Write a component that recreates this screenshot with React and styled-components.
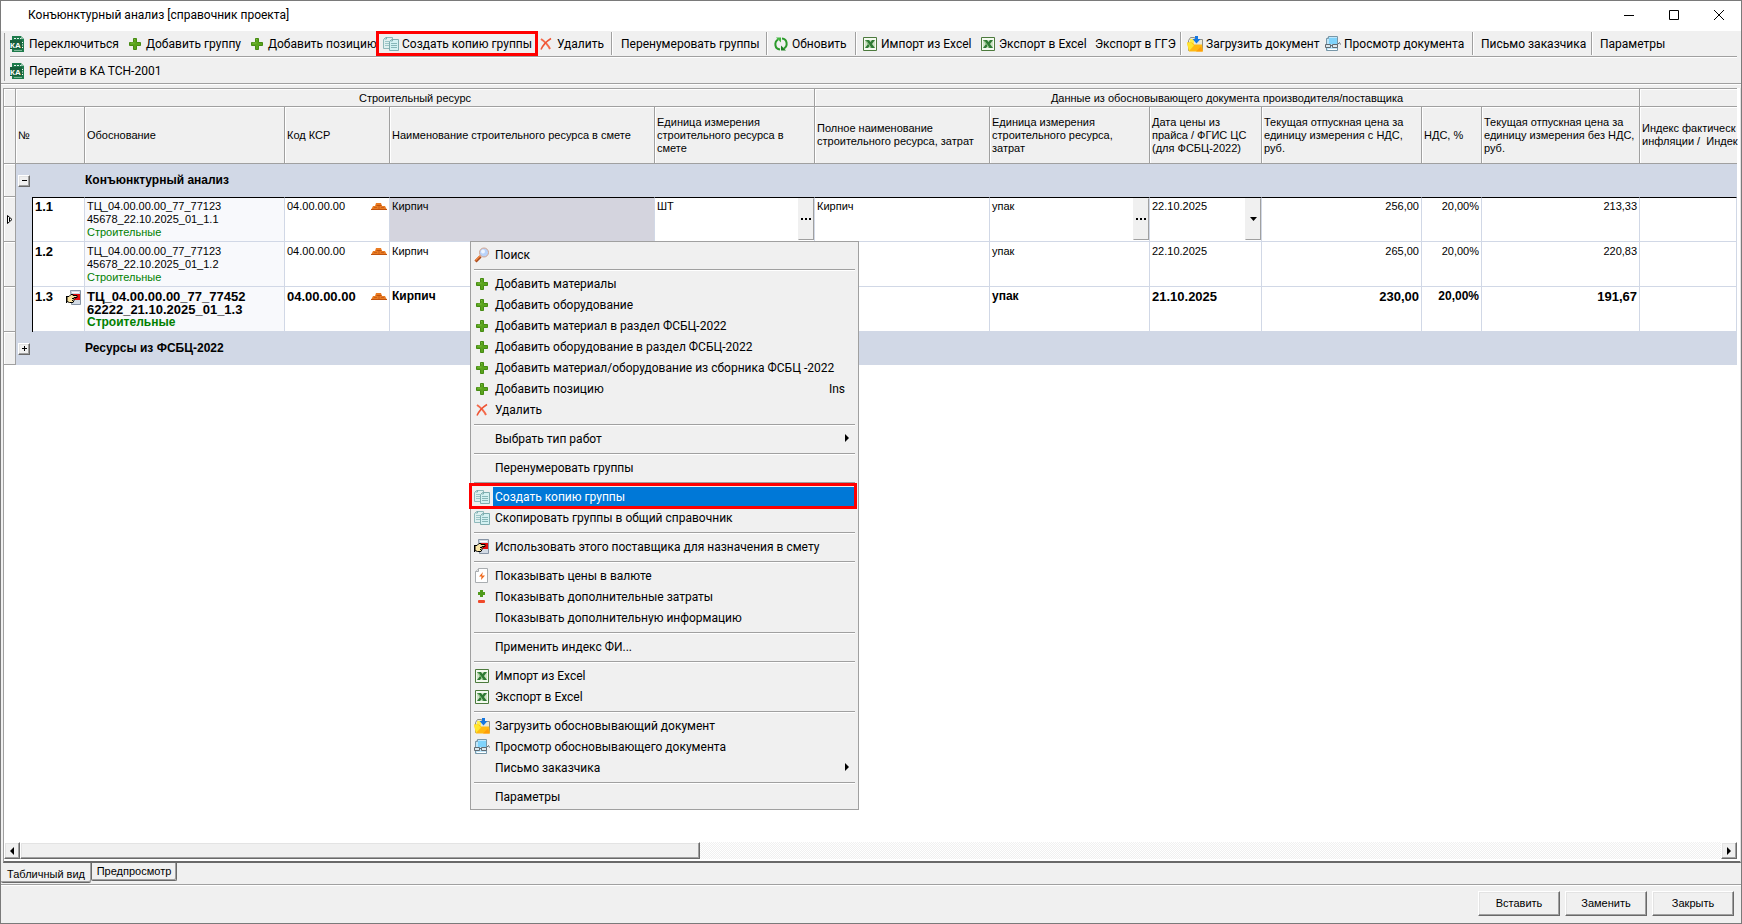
import React from "react";
import styled, { createGlobalStyle, css } from "styled-components";

const GlobalStyle = createGlobalStyle`
  * {
    box-sizing: border-box;
  }
  body {
    margin: 0;
    background: #f0f0f0;
    color: #000;
    font-family: "Liberation Sans", Arial, sans-serif;
    font-size: 11px;
    line-height: 13px;
  }
  button {
    margin: 0;
    padding: 0;
    border: 0;
    background: none;
    color: inherit;
    font: inherit;
    white-space: nowrap;
  }
  svg {
    flex: none;
  }
`;

const uiFont = css`
  font-family: Roboto, "Segoe UI", sans-serif;
  font-size: 12px;
  line-height: 16px;
`;

const raised = css`
  background: #f0f0f0;
  border: 1px solid #fff;
  border-right-color: #696969;
  border-bottom-color: #696969;
  box-shadow: inset -1px -1px 0 #a0a0a0, inset 1px 1px 0 #e3e3e3;
`;

// Window frame

const Window = styled.div`
  position: relative;
  display: flex;
  flex-direction: column;
  min-height: 100vh;
  border: 1px solid #7a7a7a;
  background: #f0f0f0;
  overflow: hidden;
`;

const TitleBar = styled.header`
  display: flex;
  align-items: center;
  height: 30px;
  padding: 0 0 2px 27px;
  background: #fff;
`;

const Title = styled.h1`
  ${uiFont}
  flex: 1;
  margin: 0;
  font-weight: 400;
`;

const WindowButton = styled.button`
  display: flex;
  align-items: center;
  justify-content: center;
  width: 45px;
  height: 28px;
`;

// Toolbar

const ToolbarArea = styled.div`
  padding-left: 9px;
  border-bottom: 1px solid #a0a0a0;
  box-shadow: 0 1px 0 #fff;
  background: linear-gradient(#a0a0a0, #a0a0a0) 3px 2px / 1px 48px no-repeat;
`;

const ToolbarRow = styled.div`
  display: flex;
  align-items: flex-start;
  height: ${(p) => (p.$line ? "27px" : "25px")};
  margin-right: 4px;
  border-bottom: ${(p) => (p.$line ? "1px solid #fff" : "0")};
  box-shadow: ${(p) => (p.$line ? "inset 0 -1px 0 #a0a0a0" : "none")};
`;

const ToolButton = styled.button`
  ${uiFont}
  display: flex;
  flex: none;
  align-items: center;
  gap: 3px;
  width: ${(p) => p.$width}px;
  height: 25px;
  padding-left: ${(p) => p.$pad || 0}px;
  border: ${(p) => (p.$marked ? "3px solid #f00" : "0")};
`;

const ToolSeparator = styled.span`
  flex: none;
  width: 2px;
  height: 23px;
  margin-top: 1px;
  border-left: 1px solid #a0a0a0;
  border-right: 1px solid #fff;
`;

// Grid

const GridArea = styled.main`
  display: flex;
  flex: 1;
  flex-direction: column;
  margin: 4px 0 0 2px;
  padding-right: 3px;
  border-right: 1px solid #e3e3e3;
  border-left: 1px solid #a0a0a0;
  border-bottom: 2px solid #696969;
  background: #fff;
`;

const Table = styled.table`
  width: 100%;
  table-layout: fixed;
  border-spacing: 0;
  border-top: 1px solid #a0a0a0;
`;

const HeadCell = styled.th`
  height: ${(p) => (p.$band ? "18px" : "57px")};
  padding: ${(p) => (p.$band ? "1px 2px 0" : "0 0 0 2px")};
  border-right: 1px solid #a0a0a0;
  border-bottom: 1px solid #a0a0a0;
  box-shadow: inset 1px 1px 0 #fff;
  background: #f0f0f0;
  font-weight: 400;
  text-align: ${(p) => (p.$band ? "center" : "left")};
  white-space: pre;

  &:last-child {
    border-right: 0;
  }
`;

const Gutter = styled.td`
  padding: 0;
  border-right: 1px solid #a0a0a0;
  border-bottom: 1px solid #a0a0a0;
  box-shadow: inset 1px 1px 0 #fff;
  background: #f0f0f0;

  svg {
    display: block;
    margin: 0 auto;
  }
`;

const GroupRow = styled.tr`
  height: 33px;
  background: #d1d8e6;
  font-size: 12px;
  font-weight: 700;
`;

const GroupCell = styled.td`
  padding: 0 0 0 ${(p) => (p.$toggle ? "2px" : "0")};
`;

const Toggle = styled.button`
  ${raised}
  display: flex;
  align-items: center;
  justify-content: center;
  width: 12px;
  height: 12px;
`;

const Indent = styled.td`
  border-right: 1px solid #000;
  background: #d1d8e6;
`;

const Row = styled.tr`
  height: 45px;
  font-weight: ${(p) => (p.$bold ? 700 : 400)};
  font-size: ${(p) => (p.$bold ? "12px" : "11px")};
`;

const Cell = styled.td`
  height: 45px;
  padding: ${(p) => (p.$first ? "2px" : "3px")} 2px 0;
  border-top: ${(p) => (p.$first ? "1px solid #000" : "0")};
  border-right: 1px solid #d1d8e6;
  border-bottom: 1px solid #d1d8e6;
  background: ${(p) => p.$bg || "#fff"};
  vertical-align: top;
  text-align: ${(p) => (p.$right ? "right" : "left")};
`;

const CellLine = styled.div`
  display: flex;
  justify-content: space-between;
  height: 13px;
`;

const Digits = styled.div`
  font-size: ${(p) => (p.$bold ? "13px" : "11px")};
`;

const RowNumber = styled.strong`
  font-size: 13px;
`;

const WorkType = styled.div`
  color: #008000;
`;

const Editor = styled.div`
  display: flex;
  justify-content: space-between;
  height: 41px;
  margin: -2px -2px 0 0;
`;

const EditorText = styled.span`
  padding-top: 2px;
`;

const EditorButton = styled.button`
  display: flex;
  align-items: center;
  justify-content: center;
  width: 16px;
  height: 42px;
  border: 1px solid #f0f0f0;
  border-right-color: #a0a0a0;
  border-bottom-color: #a0a0a0;
  background: #f0f0f0;
`;

// Scroll bar

const ScrollBar = styled.div`
  display: flex;
  height: 17px;
  margin-top: auto;
  margin-bottom: 2px;
  background: repeating-conic-gradient(#f0f0f0 0% 25%, #fff 0% 50%) 0 0 / 2px 2px;
`;

const ScrollButton = styled.button`
  ${raised}
  display: flex;
  flex: none;
  align-items: center;
  justify-content: center;
  width: 16px;
`;

const ScrollTrack = styled.div`
  flex: 1;
`;

const ScrollThumb = styled.div`
  ${raised}
  width: 40%;
  height: 17px;
`;

// Bottom tabs and buttons

const Tabs = styled.div`
  display: flex;
  align-items: flex-start;
  height: 22px;
  border-bottom: 1px solid #a0a0a0;
`;

const Tab = styled.button`
  width: ${(p) => (p.$active ? "90px" : "86px")};
  height: ${(p) => (p.$active ? "20px" : "18px")};
  padding-top: ${(p) => (p.$active ? "3px" : "0")};
  border: 1px solid #696969;
  border-top: 0;
  border-left: ${(p) => (p.$active ? "0" : "1px solid #696969")};
  border-right-width: ${(p) => (p.$active ? "0" : "1px")};
  border-radius: 0 0 2px 2px;
  box-shadow: inset -1px -1px 0 #a0a0a0;
`;

const Footer = styled.footer`
  display: flex;
  justify-content: flex-end;
  gap: 5px;
  height: 38px;
  padding: 5px 7px 0 0;
  border-top: 1px solid #fff;
`;

const FooterButton = styled.button`
  ${raised}
  width: 82px;
  height: 25px;
`;

// Context menu

const Menu = styled.div`
  position: absolute;
  top: 240px;
  left: 469px;
  width: 389px;
  padding: 3px 0 1px;
  border: 1px solid #a0a0a0;
  background: #f0f0f0;
`;

const MenuItem = styled.button`
  ${uiFont}
  position: relative;
  display: flex;
  align-items: center;
  width: 100%;
  height: 21px;
  padding: 0 3px;
  color: ${(p) => (p.$marked ? "#fff" : "#000")};

  ${(p) =>
    p.$marked &&
    css`
      &::after {
        content: "";
        position: absolute;
        inset: -4px 1px -1px -2px;
        border: 3px solid #f00;
      }
    `}
`;

const MenuIcon = styled.span`
  display: flex;
  flex: none;
  align-items: center;
  width: 19px;
  height: 21px;
  padding-bottom: 1px;
`;

const MenuLabel = styled.span`
  flex: 1;
  height: 21px;
  padding-left: 2px;
  line-height: 21px;
  text-align: left;
  background: ${(p) => (p.$marked ? "#0078d7" : "none")};
`;

const Shortcut = styled.span`
  padding-right: 10px;
  line-height: 21px;
`;

const Arrow = styled.svg`
  margin: 0 6px 3px 0;
`;

const MenuLine = styled.div`
  height: 2px;
  margin: 3px;
  border-top: 1px solid #a0a0a0;
  border-bottom: 1px solid #fff;
`;

// Icons

const Icon = ({ children }) => (
  <svg width="16" height="16" viewBox="0 0 16 16" aria-hidden="true">
    {children}
  </svg>
);

const KaIcon = () => (
  <Icon>
    <path d="M2 0h9l3 3v13H2z" fill="#1e7b4c" />
    <path d="M11 0l3 3h-3z" fill="#8fc0a6" />
    <path d="M4 2.500h7" stroke="#e6f3ec" strokeDasharray="2 1" />
    <path d="M0 4h12v9H0z" fill="#17603b" />
    <path d="M4 14.500h8" stroke="#7fb898" />
    <text x="0" y="11.500" fontSize="8" fontWeight="700" fontFamily="Liberation Sans" fill="#fff">
      КА
    </text>
    <path d="M12.500 6v1M12.500 8.500v1M12.500 11v1" stroke="#fff" />
  </Icon>
);

const PlusIcon = () => (
  <Icon>
    <path
      d="M6.500 2.500h3v4h4v3h-4v4h-3v-4h-4v-3h4z"
      fill="#5aa41c"
      stroke="#468b13"
      strokeLinejoin="round"
    />
    <path d="M7 3.500h1M3.500 7h4" stroke="#7cbc3e" />
  </Icon>
);

const DeleteIcon = () => (
  <Icon>
    <path d="M3 3c3 2 7 6 9 10" fill="none" stroke="#f4694a" strokeWidth="2" />
    <path d="M13 2.500C9 5 5 9 3 13.500" fill="none" stroke="#ef5434" strokeWidth="1.500" />
  </Icon>
);

const CopyIcon = () => (
  <Icon>
    <path d="M.5 3.500l2-2h7v11h-9z" fill="#dff0f0" stroke="#8fb9bb" />
    <path d="M2 5.500h4M2 7.500h4M2 9.500h4" stroke="#9cc6c8" />
    <path d="M6.500 5.500l2-2h7v11h-9z" fill="#d3f1f2" stroke="#7fadb0" />
    <path d="M8 7.500h6M8 9.500h6M8 11.500h6" stroke="#86b6b8" />
    <path d="M3.500 1v2h-2M9.500 3v2h-2" fill="none" stroke="#7fadb0" />
  </Icon>
);

const RefreshIcon = () => (
  <Icon>
    <path d="M7 13.500C1.500 13 1 6 5 3.500" fill="none" stroke="#2c9a2c" strokeWidth="2" />
    <path d="M3 1.500h5v5z" fill="#3fb53c" />
    <path d="M9 2.500c5.500.5 6 7.500 2 10" fill="none" stroke="#2c9a2c" strokeWidth="2" />
    <path d="M13 14.500H8v-5z" fill="#1d7f22" />
  </Icon>
);

const ExcelIcon = () => (
  <Icon>
    <path d="M1.500 1.500h13v13h-13z" fill="#f4faf0" stroke="#4c7a3d" />
    <path d="M3 4h10v8H3z" fill="#cfe3c6" />
    <path d="M3 4h4l1.500 2L10 4h3l-3 4 3 4H9L7.500 10 6 12H3l3-4z" fill="#2f7a34" />
    <path d="M4 4.500l5 7" stroke="#8fc585" />
  </Icon>
);

const FolderIcon = () => (
  <Icon>
    <path d="M1.500 14.500v-10l2-3h4l1 2h7v11z" fill="#e9e9d8" stroke="#8e8e86" />
    <path d="M3 3h4v5H3z" fill="#ffee4c" />
    <path d="M0 6.500h5l2 2h8l1 7H2z" fill="#ffb911" />
    <path d="M0 6.500h4l3 3L2 15z" fill="#ffe62e" />
    <path d="M9 15.500l5-5 1.500 5z" fill="#ff9d0a" />
    <path d="M8 0h3v3h2.500l-4 4.500-4-4.500H8z" fill="#1577e0" />
  </Icon>
);

const ViewIcon = () => (
  <Icon>
    <path d="M3.500.5h9v14h-11v-12z" fill="#bfe6fa" stroke="#7797a8" />
    <path d="M4 2h8v6H4z" fill="#7fd3fb" />
    <path d="M1.500 2.500h2v-2" fill="#fff" stroke="#7797a8" />
    <path
      d="M.5 8.500h5v3h-5zM7.500 8.500h5v3h-5zM5.500 9.500h2M12.500 8.500l2-2 1 2"
      fill="#dce8ee"
      stroke="#626a70"
    />
    <path d="M3 13.500h9" stroke="#fff" />
  </Icon>
);

const SearchIcon = () => (
  <Icon>
    <path d="M1.500 14.500l5-5" stroke="#a9481c" strokeWidth="3" />
    <path d="M1.500 13.500l5-5" stroke="#f2863e" strokeWidth="1.500" />
    <circle cx="10" cy="5.500" r="4.500" fill="#b9d3fa" stroke="#d3a58e" strokeWidth="1" />
    <circle cx="9" cy="4.500" r="2" fill="#eef5ff" />
  </Icon>
);

const HandIcon = () => (
  <Icon>
    <path d="M4.500.5h10v14h-9v-4z" fill="#d3dbe5" stroke="#8794a5" />
    <path d="M6 2.500h7" stroke="#fff" />
    <path d="M7 4h7v6H7z" fill="#e40c0c" />
    <path
      d="M1 6.500h2l2-2h2v1h4v2H8l1 1-1 1v1l-1 2H3.500L1 11.500z"
      fill="#fbe6a5"
      stroke="#000"
    />
    <path d="M.5 6v7" stroke="#000" />
    <path d="M6 8.500h2M6 10.500h1" stroke="#000" />
  </Icon>
);

const CurrencyIcon = () => (
  <Icon>
    <path d="M4.500.5h9v14h-12v-11z" fill="#fff" stroke="#a9adb0" />
    <path d="M1.500 3.500h3v-3" fill="#e6e6e6" stroke="#a9adb0" />
    <path d="M9 4L5 8.500h2.500L7 12l4-4.500H8z" fill="#f0691b" />
  </Icon>
);

const PlusMinusIcon = () => (
  <Icon>
    <path d="M6 1h3v2h2v3H9v2H6V6H4V3h2z" fill="#4f9a1b" />
    <rect x="4" y="11" width="7" height="3" rx="1" fill="#f0492a" />
  </Icon>
);

const BricksIcon = () => (
  <Icon>
    <path d="M5 3h5l1 3h3l2 4H0l2-4h2z" fill="#ea7b22" />
    <path d="M5.500 5.500h5M0 9.500h16" stroke="#c0540f" />
    <path d="M8 6v3M3 7.500h3M10 7.500h3" stroke="#c9611a" />
  </Icon>
);

const DotsIcon = () => (
  <svg width="10" height="2" viewBox="0 0 10 2" aria-hidden="true">
    <path d="M0 0h2v2H0zM4 0h2v2H4zM8 0h2v2H8z" />
  </svg>
);

const DownIcon = () => (
  <svg width="7" height="4" viewBox="0 0 7 4" aria-hidden="true">
    <path d="M0 0h7L3.500 4z" />
  </svg>
);

const CurrentRowIcon = () => (
  <svg width="6" height="9" viewBox="0 0 6 9" aria-hidden="true">
    <path d="M.5.5v8L5 4.500z" fill="#fff" stroke="#000" />
    <path d="M2 3h1v3H2z" />
  </svg>
);

const toolbar = [
  { label: "Переключиться", icon: KaIcon, width: 117 },
  { label: "Добавить группу", icon: PlusIcon, width: 122 },
  { label: "Добавить позицию", icon: PlusIcon, width: 127 },
  { label: "Создать копию группы", icon: CopyIcon, width: 162, pad: 4, marked: true },
  { label: "Удалить", icon: DeleteIcon, width: 73 },
  null,
  { label: "Перенумеровать группы", width: 153, pad: 8 },
  null,
  { label: "Обновить", icon: RefreshIcon, width: 87, pad: 5 },
  null,
  { label: "Импорт из Excel", icon: ExcelIcon, width: 123, pad: 5 },
  { label: "Экспорт в Excel", icon: ExcelIcon, width: 108 },
  { label: "Экспорт в ГГЭ", width: 92, pad: 7 },
  null,
  { label: "Загрузить документ", icon: FolderIcon, width: 143, pad: 5 },
  { label: "Просмотр документа", icon: ViewIcon, width: 147 },
  null,
  { label: "Письмо заказчика", width: 117, pad: 7 },
  null,
  { label: "Параметры", width: 90, pad: 7 },
];

const columnWidths = [12, 17, 52, 200, 105, 265, 160, 175, 160, 112, 160, 60, 158];

const headers = [
  "Обоснование",
  "Код КСР",
  "Наименование строительного ресурса в смете",
  "Единица измерения\nстроительного ресурса в\nсмете",
  "Полное наименование\nстроительного ресурса, затрат",
  "Единица измерения\nстроительного ресурса,\nзатрат",
  "Дата цены из\nпрайса / ФГИС ЦС\n(для ФСБЦ-2022)",
  "Текущая отпускная цена за\nединицу измерения с НДС,\nруб.",
  "НДС, %",
  "Текущая отпускная цена за\nединицу измерения без НДС,\nруб.",
  "Индекс фактическ\nинфляции /  Индек",
];

const rows = [
  {
    number: "1.1",
    basis: ["ТЦ_04.00.00.00_77_77123", "45678_22.10.2025_01_1.1"],
    unit: "ШТ",
    fullName: "Кирпич",
    date: "22.10.2025",
    price: "256,00",
    net: "213,33",
    active: true,
  },
  {
    number: "1.2",
    basis: ["ТЦ_04.00.00.00_77_77123", "45678_22.10.2025_01_1.2"],
    date: "22.10.2025",
    price: "265,00",
    net: "220,83",
  },
  {
    number: "1.3",
    basis: ["ТЦ_04.00.00.00_77_77452", "62222_21.10.2025_01_1.3"],
    date: "21.10.2025",
    price: "230,00",
    net: "191,67",
    bold: true,
  },
];

const menu = [
  { label: "Поиск", icon: SearchIcon },
  null,
  { label: "Добавить материалы", icon: PlusIcon },
  { label: "Добавить оборудование", icon: PlusIcon },
  { label: "Добавить материал в раздел ФСБЦ-2022", icon: PlusIcon },
  { label: "Добавить оборудование в раздел ФСБЦ-2022", icon: PlusIcon },
  { label: "Добавить материал/оборудование из сборника ФСБЦ -2022", icon: PlusIcon },
  { label: "Добавить позицию", icon: PlusIcon, shortcut: "Ins" },
  { label: "Удалить", icon: DeleteIcon },
  null,
  { label: "Выбрать тип работ", submenu: true },
  null,
  { label: "Перенумеровать группы" },
  null,
  { label: "Создать копию группы", icon: CopyIcon, marked: true },
  { label: "Скопировать группы в общий справочник", icon: CopyIcon },
  null,
  { label: "Использовать этого поставщика для назначения в смету", icon: HandIcon },
  null,
  { label: "Показывать цены в валюте", icon: CurrencyIcon },
  { label: "Показывать дополнительные затраты", icon: PlusMinusIcon },
  { label: "Показывать дополнительную информацию" },
  null,
  { label: "Применить индекс ФИ..." },
  null,
  { label: "Импорт из Excel", icon: ExcelIcon },
  { label: "Экспорт в Excel", icon: ExcelIcon },
  null,
  { label: "Загрузить обосновывающий документ", icon: FolderIcon },
  { label: "Просмотр обосновывающего документа", icon: ViewIcon },
  { label: "Письмо заказчика", submenu: true },
  null,
  { label: "Параметры" },
];

const EditCell = ({ value, active, label, children }) => (
  <Cell $first={active}>
    {active ? (
      <Editor>
        <EditorText>{value}</EditorText>
        <EditorButton aria-label={label}>{children}</EditorButton>
      </Editor>
    ) : (
      value
    )}
  </Cell>
);

const ResourceRow = ({ row }) => (
  <Row $bold={row.bold}>
    <Gutter>{row.active && <CurrentRowIcon />}</Gutter>
    <Indent />
    <Cell $first={row.active}>
      <CellLine>
        <RowNumber>{row.number}</RowNumber>
        {row.bold && <HandIcon />}
      </CellLine>
    </Cell>
    <Cell $first={row.active} $bg="#f8f9fc">
      {row.basis.map((line) => (
        <Digits key={line} $bold={row.bold}>
          {line}
        </Digits>
      ))}
      <WorkType>Строительные</WorkType>
    </Cell>
    <Cell $first={row.active}>
      <CellLine>
        <Digits $bold={row.bold}>04.00.00.00</Digits>
        <BricksIcon />
      </CellLine>
    </Cell>
    <Cell $first={row.active} $bg={row.active && "#d4d4de"}>
      Кирпич
    </Cell>
    <EditCell value={row.unit} active={row.active} label="Выбрать единицу в смете">
      <DotsIcon />
    </EditCell>
    <Cell $first={row.active}>{row.fullName}</Cell>
    <EditCell value="упак" active={row.active} label="Выбрать единицу поставщика">
      <DotsIcon />
    </EditCell>
    <EditCell
      value={<Digits $bold={row.bold}>{row.date}</Digits>}
      active={row.active}
      label="Выбрать дату"
    >
      <DownIcon />
    </EditCell>
    <Cell $first={row.active} $right>
      <Digits $bold={row.bold}>{row.price}</Digits>
    </Cell>
    <Cell $first={row.active} $right>
      20,00%
    </Cell>
    <Cell $first={row.active} $right>
      <Digits $bold={row.bold}>{row.net}</Digits>
    </Cell>
    <Cell $first={row.active} />
  </Row>
);

const Group = ({ title, open }) => (
  <GroupRow>
    <Gutter />
    <GroupCell $toggle>
      <Toggle aria-label={open ? "Свернуть" : "Развернуть"}>
        <svg width="7" height="7" viewBox="0 0 7 7" aria-hidden="true">
          <path d={open ? "M1 3.500h5" : "M1 3.500h5M3.500 1v5"} stroke="#000" />
        </svg>
      </Toggle>
    </GroupCell>
    <GroupCell />
    <GroupCell colSpan={11}>{title}</GroupCell>
  </GroupRow>
);

const ResourceTable = () => (
  <Table>
    <colgroup>
      {columnWidths.map((width, i) => (
        <col key={i} width={width} />
      ))}
      <col />
    </colgroup>
    <thead>
      <tr>
        <HeadCell $band />
        <HeadCell $band colSpan={6}>
          Строительный ресурс
        </HeadCell>
        <HeadCell $band colSpan={6}>
          Данные из обосновывающего документа производителя/поставщика
        </HeadCell>
        <HeadCell $band />
      </tr>
      <tr>
        <HeadCell />
        <HeadCell colSpan={2}>№</HeadCell>
        {headers.map((header, i) => (
          <HeadCell key={i}>{header}</HeadCell>
        ))}
      </tr>
    </thead>
    <tbody>
      <Group title="Конъюнктурный анализ" open />
      {rows.map((row) => (
        <ResourceRow key={row.number} row={row} />
      ))}
      <Group title="Ресурсы из ФСБЦ-2022" />
    </tbody>
  </Table>
);

const ContextMenu = () => (
  <Menu role="menu">
    {menu.map((item, i) =>
      item ? (
        <MenuItem key={i} role="menuitem" $marked={item.marked}>
          <MenuIcon>{item.icon && <item.icon />}</MenuIcon>
          <MenuLabel $marked={item.marked}>{item.label}</MenuLabel>
          {item.shortcut && <Shortcut>{item.shortcut}</Shortcut>}
          {item.submenu && (
            <Arrow width="4" height="8" viewBox="0 0 4 8" aria-hidden="true">
              <path d="M0 0l4 4-4 4z" />
            </Arrow>
          )}
        </MenuItem>
      ) : (
        <MenuLine key={i} />
      )
    )}
  </Menu>
);

const App = () => {
  return (
    <>
      <GlobalStyle />
      <Window>
        <TitleBar>
          <Title>Конъюнктурный анализ [справочник проекта]</Title>
          <WindowButton aria-label="Свернуть окно">
            <svg width="10" height="10" viewBox="0 0 10 10">
              <path d="M0 5.500h10" stroke="#000" />
            </svg>
          </WindowButton>
          <WindowButton aria-label="Развернуть окно">
            <svg width="10" height="10" viewBox="0 0 10 10">
              <path d="M.5.5h9v9h-9z" fill="none" stroke="#000" />
            </svg>
          </WindowButton>
          <WindowButton aria-label="Закрыть окно">
            <svg width="10" height="10" viewBox="0 0 10 10">
              <path d="M0 0l10 10M10 0L0 10" stroke="#000" />
            </svg>
          </WindowButton>
        </TitleBar>

        <ToolbarArea>
          <ToolbarRow $line>
            {toolbar.map((item, i) =>
              item ? (
                <ToolButton key={i} $width={item.width} $marked={item.marked} $pad={item.pad}>
                  {item.icon && <item.icon />}
                  {item.label}
                </ToolButton>
              ) : (
                <ToolSeparator key={i} />
              )
            )}
          </ToolbarRow>
          <ToolbarRow>
            <ToolButton $width={160}>
              <KaIcon />
              Перейти в КА ТСН-2001
            </ToolButton>
          </ToolbarRow>
        </ToolbarArea>

        <GridArea>
          <ResourceTable />
          <ScrollBar>
            <ScrollButton aria-label="Прокрутить влево">
              <svg width="4" height="8" viewBox="0 0 4 8">
                <path d="M4 0v8L0 4z" />
              </svg>
            </ScrollButton>
            <ScrollTrack>
              <ScrollThumb />
            </ScrollTrack>
            <ScrollButton aria-label="Прокрутить вправо">
              <svg width="4" height="8" viewBox="0 0 4 8">
                <path d="M0 0v8l4-4z" />
              </svg>
            </ScrollButton>
          </ScrollBar>
        </GridArea>

        <Tabs>
          <Tab $active>Табличный вид</Tab>
          <Tab>Предпросмотр</Tab>
        </Tabs>
        <Footer>
          <FooterButton>Вставить</FooterButton>
          <FooterButton>Заменить</FooterButton>
          <FooterButton>Закрыть</FooterButton>
        </Footer>

        <ContextMenu />
      </Window>
    </>
  );
};

export default App;
